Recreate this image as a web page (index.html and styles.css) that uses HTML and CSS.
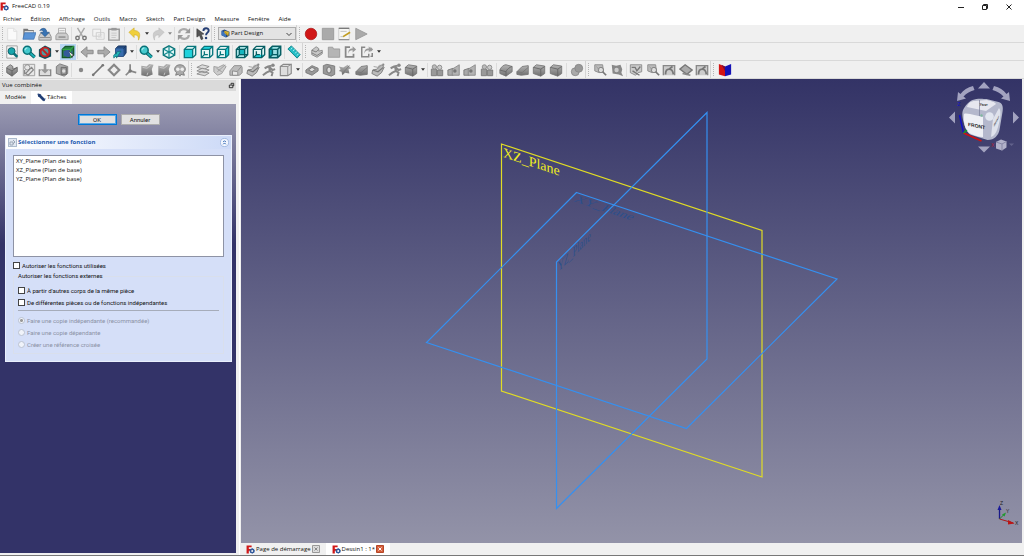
FILE: index.html
```html
<!DOCTYPE html>
<html lang="fr">
<head>
<meta charset="utf-8">
<title>FreeCAD 0.19</title>
<link rel="stylesheet" href="styles.css">
</head>
<body>
<svg class="sprite" aria-hidden="true">
  <defs>
    <linearGradient id="steel" x1="0" y1="0" x2="0" y2="1"><stop offset="0" stop-color="#b4b4b4"/><stop offset="1" stop-color="#707070"/></linearGradient>
    <symbol id="logo" viewBox="0 0 16 16"><path d="M1 1h9v3H5v3h4v3H5v5H1z" fill="#d01818"/><circle cx="11" cy="10.500" r="3" fill="none" stroke="#31599c" stroke-width="2.500"/><path d="M11 5.500v2M11 13.500v2M6 10.500h2M14 10.500h2M7.500 7l1.500 1.500M13 12.500l1.500 1.500M14.500 7L13 8.500M7.500 14L9 12.500" stroke="#31599c" stroke-width="1.500"/></symbol>
    <symbol id="new" viewBox="0 0 16 16"><path d="M3 1.500h7l3.500 3.500v10H3z" fill="#fafafa" stroke="#ddd"/><path d="M10 1.500V5h3.500" fill="none" stroke="#ddd"/></symbol>
    <symbol id="open" viewBox="0 0 16 16"><path d="M1.500 2h5l1 1.500h6V13h-12z" fill="#777"/><path d="M3 4.500h10V8H3z" fill="#ddd"/><path d="M3 6.500h13L13.500 14H1z" fill="#5b94d6" stroke="#3d70ac" stroke-width=".8"/></symbol>
    <symbol id="save" viewBox="0 0 16 16"><path d="M3 7h10l2 4v4H1v-4z" fill="#ccc" stroke="#888"/><path d="M2 12h12" stroke="#888"/><path d="M2 4c3-4 8-3 8 2h3l-5 5-5-5h3c0-2-1-3-4-2z" fill="#3873b4" stroke="#285486" stroke-width=".7"/></symbol>
    <symbol id="print" viewBox="0 0 16 16"><path d="M4 1.500h8V8H4z" fill="#f4f4f4" stroke="#aaa"/><path d="M3 7h10l2 3v4.500H1V10z" fill="#ccc" stroke="#999"/><path d="M4 11.500h8" stroke="#888" stroke-width="1.500"/><path d="M5 4h6M5 6h6" stroke="#bbb"/></symbol>
    <symbol id="cut" viewBox="0 0 16 16"><path d="M4 1l6 10M12 1L6 11" stroke="#aaa" stroke-width="1.600"/><circle cx="4" cy="12.500" r="2" fill="none" stroke="#777" stroke-width="1.600"/><circle cx="12" cy="12.500" r="2" fill="none" stroke="#777" stroke-width="1.600"/></symbol>
    <symbol id="copy" viewBox="0 0 16 16"><path d="M2 2.500h9v8H2zM6 6.500h9v7.500H6z" fill="#f3f3f3" stroke="#ccc"/><path d="M8 9h5M8 11.500h5" stroke="#d4d4d4"/></symbol>
    <symbol id="paste" viewBox="0 0 16 16"><path d="M2 2.500h12v12.500H2z" fill="#e8e8e8" stroke="#999" stroke-width="1.600"/><path d="M5 1h6v3H5z" fill="#999"/><path d="M5 7h6M5 9.500h6M5 12h5" stroke="#c5c5c5"/></symbol>
    <symbol id="undo" viewBox="0 0 16 16"><path d="M1 6l6-5v3c6 0 8 4 5 11 0-5-1-6-5-6v3z" fill="#f0cf3a" stroke="#cfae2a" stroke-width=".7"/></symbol>
    <symbol id="redo" viewBox="0 0 16 16"><path d="M15 6L9 1v3C3 4 1 8 4 15c0-5 1-6 5-6v3z" fill="#ccc" stroke="#bbb" stroke-width=".7"/></symbol>
    <symbol id="refresh" viewBox="0 0 16 16"><path d="M2.500 7c0-5 7-6 10-2.500M13.500 9c0 5-7 6-10 2.500" fill="none" stroke="#aaa" stroke-width="2.500"/><path d="M15 1v6H9zM1 15V9h6z" fill="#999"/></symbol>
    <symbol id="whats" viewBox="0 0 16 16"><path d="M1 2l8 6-3 .5 2 5-2 1-2-5-3 2z" fill="#555" stroke="#333" stroke-width=".7"/><path d="M8.500 4.500c0-4 6-4 6-.5 0 2.500-3 2.500-3 5.500" fill="none" stroke="#263f74" stroke-width="2.200"/><circle cx="11.500" cy="12.500" r="1.400" fill="#263f74"/></symbol>
    <symbol id="pd" viewBox="0 0 16 16"><path d="M1 3l5-2 9 4v7l-6 3-8-4z" fill="#24477e"/><path d="M1 3l8 4v8l-8-4z" fill="#3d74bd"/><path d="M6 3l8 2-1 8-7-6z" fill="#d9b32b"/><path d="M8 6l4 6" stroke="#7a5c10"/></symbol>
    <symbol id="rec" viewBox="0 0 16 16"><circle cx="8" cy="8" r="6.600" fill="#d01616" stroke="#a61111" stroke-width=".8"/></symbol>
    <symbol id="stop" viewBox="0 0 16 16"><path d="M1.500 1.500h13v13h-13z" fill="#aaa" stroke="#999"/></symbol>
    <symbol id="edit" viewBox="0 0 16 16"><path d="M2 1.500h12v13H2z" fill="#f7f7f4" stroke="#ccc"/><path d="M2 1.500h12" stroke="#777" stroke-width="1.500"/><path d="M2 14.500h12" stroke="#777"/><path d="M4 5h7M4 11h4" stroke="#bbb"/><path d="M7 11l8-5" stroke="#c29e22" stroke-width="2"/></symbol>
    <symbol id="play" viewBox="0 0 16 16"><path d="M2 1.500L15 8 2 14.500z" fill="#aaa" stroke="#999"/></symbol>
    <symbol id="fit" viewBox="0 0 16 16"><path d="M2 1h12v14H2z" fill="#f6f6f6" stroke="#999"/><circle cx="7.500" cy="7" r="4" fill="#19a6ac" stroke="#09575f"/><path d="M10 9.500l4 4" stroke="#087179" stroke-width="3"/></symbol>
    <symbol id="zoom" viewBox="0 0 16 16"><path d="M9 9l5.500 5" stroke="#075d62" stroke-width="4"/><path d="M9 9l5.500 5" stroke="#1fb2b8" stroke-width="2"/><circle cx="6" cy="6" r="4.500" fill="#45c9cd" stroke="#087177" stroke-width="1.800"/><path d="M3.500 6c0-2 1-2.500 2.500-2.500" stroke="#d8ffff" fill="none"/></symbol>
    <symbol id="noentry" viewBox="0 0 16 16"><path d="M1 5l7-4.500L15 4v9l-7 3-7-3z" fill="#124e5b"/><circle cx="8" cy="8" r="5" fill="#4d9da1" stroke="#c52020" stroke-width="2.200"/><path d="M4.500 4.500l7 7" stroke="#c52020" stroke-width="2.200"/></symbol>
    <symbol id="bbox" viewBox="0 0 16 16"><path d="M1.500 5L5 1.500h9.500V11L11 14.500H1.500z" fill="#267c46" stroke="#15562b" stroke-width="1.500"/><path d="M3 7l5-2 5 2v5l-5 2-5-2z" fill="#345a9b"/><path d="M1.500 5H11v9.500M11 5l3.500-3.500" fill="none" stroke="#31a647" stroke-width="1.500"/><path d="M9 7l6 5-3 .5 1 2.500" fill="#eee" stroke="#222" stroke-width=".7"/></symbol>
    <symbol id="left" viewBox="0 0 16 16"><path d="M1 8l7-6v4h7v4H8v4z" fill="#aaa" stroke="#888"/></symbol>
    <symbol id="right" viewBox="0 0 16 16"><path d="M15 8L8 2v4H1v4h7v4z" fill="#aaa" stroke="#888"/></symbol>
    <symbol id="linkbox" viewBox="0 0 16 16"><path d="M3 4l3-3h9v8l-3 4H3z" fill="#244b82" stroke="#17345f"/><path d="M3 4h9v9H3z" fill="#376cad"/><path d="M12 4l3-3" stroke="#17345f"/><path d="M9 7l-5 1v2c-3 0-4 2-3 5 1-2 2-2 3-2v2z" fill="#25b3b8" stroke="#08686c" stroke-width=".7"/></symbol>
    <symbol id="iso" viewBox="0 0 16 16"><path d="M8 1l6.500 3.500v7L8 15l-6.500-3.500v-7z" fill="#e5f7f7" stroke="#0c7377" stroke-width="1.600"/><path d="M1.500 4.500L8 8l6.500-3.500M8 1v14M1.500 11.500L8 8l6.500 3.500" fill="none" stroke="#148b90" stroke-width="1.400"/></symbol>
    <symbol id="vfront" viewBox="0 0 16 16"><path d="M1.500 5L5 1.500h9.500V11L11 14.500H1.500z" fill="#d6f4f4"/><path d="M1.500 5H11v9.500H1.500z" fill="#20d2dc"/><path d="M1.500 5L5 1.500h9.500V11L11 14.500H1.500zM1.500 5H11v9.500M11 5l3.500-3.500" fill="none" stroke="#08767c" stroke-width="1.500"/></symbol>
    <symbol id="vtop" viewBox="0 0 16 16"><path d="M1.500 5L5 1.500h9.500V11L11 14.500H1.500z" fill="#e7f5f5"/><path d="M1.500 5L5 1.500h9.500L11 5z" fill="#20d2dc"/><path d="M1.500 5L5 1.500h9.500V11L11 14.500H1.500zM1.500 5H11v9.500M11 5l3.500-3.500M5 7v4h4M5 11l-3.500 3.500" fill="none" stroke="#08767c" stroke-width="1.500"/></symbol>
    <symbol id="vright" viewBox="0 0 16 16"><path d="M1.500 5L5 1.500h9.500V11L11 14.500H1.500z" fill="#e7f5f5"/><path d="M11 5l3.500-3.500V11L11 14.500z" fill="#20d2dc"/><path d="M1.500 5L5 1.500h9.500V11L11 14.500H1.500zM1.500 5H11v9.500M11 5l3.500-3.500M5 7v4h4M5 11l-3.500 3.500" fill="none" stroke="#08767c" stroke-width="1.500"/></symbol>
    <symbol id="vrear" viewBox="0 0 16 16"><path d="M1.500 5L5 1.500h9.500V11L11 14.500H1.500z" fill="#a9e4e6"/><path d="M5 5h6v6H5z" fill="#16b8c1"/><path d="M1.500 5L5 1.500h9.500V11L11 14.500H1.500zM1.500 5H11v9.500M11 5l3.500-3.500M5 2v9h9M5 11l-3.500 3.500" fill="none" stroke="#075f64" stroke-width="1.500"/></symbol>
    <symbol id="vbottom" viewBox="0 0 16 16"><path d="M1.500 5L5 1.500h9.500V11L11 14.500H1.500z" fill="#e2f4f4"/><path d="M1.500 14.500L5 11h9.500L11 14.500z" fill="#20d2dc"/><path d="M1.500 5L5 1.500h9.500V11L11 14.500H1.500zM1.500 5H11v9.500M11 5l3.500-3.500M5 7v4h4M5 11l-3.500 3.500" fill="none" stroke="#075f64" stroke-width="1.500"/></symbol>
    <symbol id="vleft" viewBox="0 0 16 16"><path d="M1.500 5L5 1.500h9.500V11L11 14.500H1.500z" fill="#9bdfe2"/><path d="M1.500 5L5 2v9l-3.500 3.500z" fill="#0eaab5"/><path d="M1.500 5L5 1.500h9.500V11L11 14.500H1.500zM1.500 5H11v9.500M11 5l3.500-3.500M5 5v6h6M5 11l-3.500 3.500" fill="none" stroke="#075f64" stroke-width="1.700"/></symbol>
    <symbol id="ruler" viewBox="0 0 16 16"><path d="M5 1l10 10-3.500 4L1 4.500z" fill="#22bcc4" stroke="#0b7f86"/><path d="M6 3L4.500 5M8.500 5L7 7M11 7.500L9.500 9.500M13 10l-1.500 2" stroke="#c3f4f4"/></symbol>
    <symbol id="gpart" viewBox="0 0 16 16"><path d="M2 6l5-4 3 2v3l4-1v4l-6 4-6-3z" fill="#c7c7c7" stroke="#888"/><path d="M2 6l5 2 3-3M2 9l6 3 6-4" fill="none" stroke="#777"/></symbol>
    <symbol id="folder" viewBox="0 0 16 16"><path d="M1.500 2.500h5l1 2h7v9.500h-13z" fill="#b5b5b5" stroke="#999"/></symbol>
    <symbol id="link" viewBox="0 0 16 16"><path d="M8 2.500H3v11h9V10" fill="none" stroke="#888" stroke-width="2"/><path d="M6 10c0-5 2-6 5-6V1.500L15 5l-4 3.500V6C8 6 7 7 6 10z" fill="#999"/></symbol>
    <symbol id="links" viewBox="0 0 16 16"><path d="M6 2.500H2v11h8V10M12 13h2v-4" fill="none" stroke="#888" stroke-width="1.700"/><path d="M5 10c0-5 2-6 5-6V1.500L13 5l-3 3.500V6C7 6 6 7 5 10zM12 2l3 3-3 3" fill="#999"/></symbol>
    <symbol id="solid" viewBox="0 0 16 16"><path d="M1.500 5L5 2l9.500 1.500v8.500L10 15l-8.500-3z" fill="url(#steel)" stroke="#777"/><path d="M1.500 5l8.500 2 4.500-3M10 7v8" stroke="#666" fill="none"/></symbol>
    <symbol id="fillet" viewBox="0 0 16 16"><path d="M1 8c1-3 4-6 7-6l7 2v6l-7 5-7-3z" fill="url(#steel)" stroke="#777"/><path d="M1 8l7 2c1-3 4-5 7-6M8 10v5" stroke="#666" fill="none"/></symbol>
    <symbol id="body" viewBox="0 0 16 16"><path d="M2 5l4-3 3 2v3l5-2v5l-6 5-6-4z" fill="url(#steel)" stroke="#666"/><path d="M2 6l6 3 6-4M8 9v6" fill="none" stroke="#666"/></symbol>
    <symbol id="sketch" viewBox="0 0 16 16"><path d="M1.500 1.500h13v13h-13z" fill="#e7e7e7" stroke="#999"/><circle cx="6" cy="5" r="3" fill="none" stroke="#888"/><path d="M4 12l7-7 2 3-6 6zM3 8v5" fill="none" stroke="#888" stroke-width="1.400"/></symbol>
    <symbol id="import" viewBox="0 0 16 16"><path d="M3 8H1.500v6.500h13V8H13" fill="#ddd" stroke="#888" stroke-width="1.500"/><path d="M6.500 1h3v6H13l-5 5-5-5h3.500z" fill="#999"/></symbol>
    <symbol id="clip" viewBox="0 0 16 16"><path d="M1.500 4l4-3 9 3v8l-4 3-9-3z" fill="#aaa" stroke="#777"/><path d="M7 5h6v8H7z" fill="#999" stroke="#666"/><circle cx="10" cy="9" r="2" fill="#ddd"/></symbol>
    <symbol id="point" viewBox="0 0 16 16"><circle cx="8" cy="8" r="2.500" fill="#888"/></symbol>
    <symbol id="line" viewBox="0 0 16 16"><path d="M2 14L14 2" stroke="#777" stroke-width="2"/><circle cx="2.500" cy="13.500" r="1.500" fill="#777"/><circle cx="13.500" cy="2.500" r="1.500" fill="#777"/></symbol>
    <symbol id="diamond" viewBox="0 0 16 16"><path d="M8 2l6 6-6 6-6-6z" fill="#eee" stroke="#888" stroke-width="2.500"/></symbol>
    <symbol id="axes" viewBox="0 0 16 16"><path d="M7 1.500V9l7 2M7 9l-5 5" fill="none" stroke="#888" stroke-width="2"/><circle cx="7" cy="9" r="2" fill="#777"/></symbol>
    <symbol id="bind" viewBox="0 0 16 16"><path d="M1.500 3l6 1 3-3 5 1-2 5 1 6-6 2.500-7-1.500z" fill="url(#steel)"/><path d="M3 5l5 1 4-3M8 14l1-3" stroke="#ccc" fill="none"/></symbol>
    <symbol id="dd" viewBox="0 0 16 16"><path d="M3 14l1-3C0 8 2 2 8 2s8 6 4 9l1 3-4-1-1 2-2-2z" fill="#aaa" stroke="#777"/><circle cx="5.500" cy="7" r="2" fill="#eee"/><circle cx="10.500" cy="7" r="2" fill="#eee"/></symbol>
    <symbol id="sheets" viewBox="0 0 16 16"><path d="M1 5l6-3 8 2-5 3z" fill="#ddd" stroke="#888"/><path d="M1 9l6-3 8 2-5 3zM1 12.500l6-3 8 2-5 3z" fill="#d8d8d8" stroke="#888"/></symbol>
    <symbol id="revolve" viewBox="0 0 16 16"><path d="M1 4l5 1 6-3 3 2-5 8-5 2-4-4z" fill="#ccc" stroke="#999"/><path d="M5 10l9-8M4 6l6 4" stroke="#999"/></symbol>
    <symbol id="loft" viewBox="0 0 16 16"><path d="M1 14V9l5-6h8l1 2v6l-3 3z" fill="#bbb" stroke="#888"/><path d="M4 14V9l6 1v4z" fill="#e8e8e8" stroke="#888"/><path d="M10 9l4-5" stroke="#888"/></symbol>
    <symbol id="sweep" viewBox="0 0 16 16"><path d="M2 8l5-1 5-5 3 3-3 6-5 4-6-3z" fill="#bbb" stroke="#777"/><path d="M2 8l6 2 6-5" stroke="#777" fill="none" stroke-width="1.300"/><path d="M3 4l5 1 2-3" fill="none" stroke="#999"/><circle cx="14" cy="2" r="1.300" fill="#888"/></symbol>
    <symbol id="helix" viewBox="0 0 16 16"><path d="M11 3L7 4 3 6M8 4l1 5-4 2-4 3M9 9l3 2-1 4M9 5l3 3 3-1" fill="none" stroke="#888" stroke-width="2.300"/><circle cx="12.500" cy="2.500" r="2" fill="#888"/></symbol>
    <symbol id="prim" viewBox="0 0 16 16"><path d="M1.500 4L5 1.500h9V12l-4 2.500H1.500z" fill="#ddd" stroke="#888" stroke-width="1.300"/><path d="M1.500 4H10v10.500M10 4l4-2.500" fill="none" stroke="#888"/></symbol>
    <symbol id="pocket" viewBox="0 0 16 16"><path d="M1 8l7-5 7 3v3l-7 5-7-3z" fill="#999" stroke="#777"/><path d="M4 8l4-3 4 2-4 3z" fill="#e0e0e0" stroke="#777"/></symbol>
    <symbol id="hole" viewBox="0 0 16 16"><path d="M1.500 3l4-1.500 9 2V13l-4 2-9-3z" fill="#999" stroke="#777"/><ellipse cx="8" cy="8" rx="2.500" ry="3.500" fill="#ddd" stroke="#666"/></symbol>
    <symbol id="groove" viewBox="0 0 16 16"><path d="M1 4l5 1 5-3 4 4-3 1 1 5-5-1-3 3-1-4-3-1 2-2z" fill="url(#steel)"/><path d="M5 12l8-9" stroke="#777"/></symbol>
    <symbol id="wedge" viewBox="0 0 16 16"><path d="M1 10l6-6 7-1v10l-8 1-5-1z" fill="url(#steel)" stroke="#777"/><path d="M1 10l6 1 7-6" stroke="#777" fill="none"/></symbol>
    <symbol id="bool" viewBox="0 0 16 16"><circle cx="6" cy="10" r="4.500" fill="#aaa" stroke="#888"/><circle cx="10" cy="6" r="4.500" fill="#999" stroke="#888"/></symbol>
    <symbol id="mirror" viewBox="0 0 16 16"><path d="M1.500 7h6v7.500h-6zM8.500 8h6v6.500h-6z" fill="#999" stroke="#777"/><circle cx="5" cy="4.500" r="2.500" fill="#bbb" stroke="#888"/><circle cx="11" cy="5" r="2.500" fill="#ccc" stroke="#888"/></symbol>
    <symbol id="linear" viewBox="0 0 16 16"><path d="M1 8l6-2v8H1z" fill="#aaa" stroke="#777"/><path d="M6 7l8-5v12H6z" fill="#b3b3b3" stroke="#888"/><circle cx="9" cy="9" r="2" fill="#777"/></symbol>
    <symbol id="zoomcheck" viewBox="0 0 16 16"><path d="M2 2h9l1 8-5 1-5-2z" fill="#bbb" stroke="#888"/><circle cx="9" cy="8" r="3" fill="#ddd" stroke="#777"/><path d="M11 10l4 4" stroke="#777" stroke-width="2"/><path d="M4 4l3 4" stroke="#999"/></symbol>
    <symbol id="mgear" viewBox="0 0 16 16"><path d="M2 2l5 1 5-1 2 5-1 4 2 4-5-2-7-1z" fill="#888"/><circle cx="7.500" cy="8" r="2.500" fill="#ccc"/></symbol>
    <symbol id="mcheck" viewBox="0 0 16 16"><path d="M1.500 2h13v8l-4 1-3 3-6-3z" fill="#ccc" stroke="#888"/><path d="M3 5h4l2 4 4-5M4 9l8 5" fill="none" stroke="#777" stroke-width="1.500"/></symbol>
    <symbol id="marc" viewBox="0 0 16 16"><path d="M1.500 14V3h13v11" fill="#ccc" stroke="#888" stroke-width="1.500"/><path d="M4 13c0-8 8-8 9 0M8 7l4-3" fill="none" stroke="#777" stroke-width="2"/></symbol>
    <symbol id="mdia" viewBox="0 0 16 16"><path d="M1 7l6-5 8 6-6 5z" fill="#aaa" stroke="#777" stroke-width="1.500"/><path d="M4 12l9 2" stroke="#888" stroke-width="2"/></symbol>
    <symbol id="book" viewBox="0 0 16 16"><path d="M1 1l7 3v11l-7-2z" fill="#d31212"/><path d="M15 1L8 4v11l7-2z" fill="#1512b6"/><path d="M4 2l4 2v5z" fill="#780d38"/></symbol>
    <symbol id="caret" viewBox="0 0 6 4"><path d="M0 0h6L3 4z" fill="currentColor"/></symbol>
  </defs>
</svg>

<header class="titlebar">
  <svg class="logo"><use href="#logo"/></svg>
  <h1 class="app-title">FreeCAD 0.19</h1>
  <div class="window-buttons">
    <button aria-label="Réduire"><svg viewBox="0 0 8 8"><path d="M1 4.500h6" stroke="#222" fill="none"/></svg></button>
    <button aria-label="Restaurer"><svg viewBox="0 0 8 8"><path d="M1.500 2.500h4v4h-4zM2.500 2.500v-1h4v4h-1" stroke="#222" fill="none"/></svg></button>
    <button aria-label="Fermer"><svg viewBox="0 0 8 8"><path d="M1.500 1.500l5 5M6.500 1.500l-5 5" stroke="#222" fill="none"/></svg></button>
  </div>
</header>
<nav class="menubar">
  <button>Fichier</button><button>Édition</button><button>Affichage</button><button>Outils</button><button>Macro</button><button>Sketch</button><button>Part Design</button><button>Measure</button><button>Fenêtre</button><button>Aide</button>
</nav>

<div class="toolbar">
  <i class="grip first"></i>
  <div class="group"><button aria-label="Nouveau"><svg><use href="#new"/></svg></button><button aria-label="Ouvrir"><svg><use href="#open"/></svg></button><button aria-label="Enregistrer"><svg><use href="#save"/></svg></button><button aria-label="Imprimer"><svg><use href="#print"/></svg></button></div>
  <i class="sep"></i>
  <div class="group"><button aria-label="Couper"><svg><use href="#cut"/></svg></button><button aria-label="Copier"><svg><use href="#copy"/></svg></button><button aria-label="Coller"><svg><use href="#paste"/></svg></button></div>
  <i class="sep wide"></i>
  <div class="group"><button aria-label="Annuler l'action"><svg><use href="#undo"/></svg></button></div>
  <button class="drop" aria-label="Historique d'annulation"><svg><use href="#caret"/></svg></button>
  <div class="group"><button aria-label="Rétablir"><svg><use href="#redo"/></svg></button></div>
  <button class="drop dim" aria-label="Historique de rétablissement"><svg><use href="#caret"/></svg></button>
  <i class="sep"></i>
  <div class="group"><button aria-label="Rafraîchir"><svg><use href="#refresh"/></svg></button></div>
  <i class="sep"></i>
  <div class="group"><button aria-label="Qu'est-ce que c'est ?"><svg><use href="#whats"/></svg></button></div>
  <i class="grip"></i>
  <div class="workbench">
    <svg class="wb-icon"><use href="#pd"/></svg>
    <select aria-label="Atelier"><option>Part Design</option></select>
    <svg class="chevron" viewBox="0 0 8 8"><path d="M1.500 3L4 5.500 6.500 3" fill="none" stroke="#444"/></svg>
  </div>
  <i class="grip"></i>
  <div class="group"><button aria-label="Enregistrer une macro"><svg><use href="#rec"/></svg></button><button aria-label="Arrêter"><svg><use href="#stop"/></svg></button><button aria-label="Macros"><svg><use href="#edit"/></svg></button><button aria-label="Exécuter"><svg><use href="#play"/></svg></button></div>
</div>

<div class="toolbar">
  <i class="grip first"></i>
  <div class="group"><button aria-label="Tout afficher"><svg><use href="#fit"/></svg></button><button aria-label="Zoom sélection"><svg><use href="#zoom"/></svg></button><button aria-label="Style de rendu"><svg><use href="#noentry"/></svg></button></div>
  <button class="drop" aria-label="Styles de rendu"><svg><use href="#caret"/></svg></button>
  <div class="group"><button class="active" aria-label="Boîte englobante"><svg><use href="#bbox"/></svg></button></div>
  <i class="sep"></i>
  <div class="group"><button aria-label="Précédent"><svg><use href="#left"/></svg></button><button aria-label="Suivant"><svg><use href="#right"/></svg></button><button aria-label="Aller à l'objet lié"><svg><use href="#linkbox"/></svg></button></div>
  <button class="drop" aria-label="Navigation des liens"><svg><use href="#caret"/></svg></button>
  <i class="sep"></i>
  <div class="group"><button aria-label="Zoom"><svg><use href="#zoom"/></svg></button></div>
  <button class="drop" aria-label="Options de zoom"><svg><use href="#caret"/></svg></button>
  <div class="group"><button aria-label="Isométrique"><svg><use href="#iso"/></svg></button></div>
  <i class="sep wide"></i>
  <div class="group"><button aria-label="Face"><svg><use href="#vfront"/></svg></button><button aria-label="Dessus"><svg><use href="#vtop"/></svg></button><button aria-label="Droite"><svg><use href="#vright"/></svg></button></div>
  <i class="sep"></i>
  <div class="group"><button aria-label="Arrière"><svg><use href="#vrear"/></svg></button><button aria-label="Dessous"><svg><use href="#vbottom"/></svg></button><button aria-label="Gauche"><svg><use href="#vleft"/></svg></button></div>
  <i class="sep"></i>
  <div class="group"><button aria-label="Mesurer"><svg><use href="#ruler"/></svg></button></div>
  <i class="grip"></i>
  <div class="group"><button aria-label="Créer une pièce"><svg><use href="#gpart"/></svg></button><button aria-label="Créer un groupe"><svg><use href="#folder"/></svg></button><button aria-label="Créer un lien"><svg><use href="#link"/></svg></button><button aria-label="Créer un sous-lien"><svg><use href="#links"/></svg></button></div>
  <button class="drop" aria-label="Options de lien"><svg><use href="#caret"/></svg></button>
</div>

<div class="toolbar">
  <i class="grip first"></i>
  <div class="group"><button aria-label="Corps"><svg><use href="#body"/></svg></button><button aria-label="Esquisse"><svg><use href="#sketch"/></svg></button><button aria-label="Importer"><svg><use href="#import"/></svg></button><button aria-label="Plaquer"><svg><use href="#clip"/></svg></button></div>
  <i class="sep"></i>
  <div class="group"><button aria-label="Point"><svg><use href="#point"/></svg></button><button aria-label="Ligne"><svg><use href="#line"/></svg></button><button aria-label="Plan"><svg><use href="#diamond"/></svg></button><button aria-label="Repère"><svg><use href="#axes"/></svg></button><button aria-label="Forme liée"><svg><use href="#bind"/></svg></button><button aria-label="Sous-forme liée"><svg><use href="#bind"/></svg></button><button aria-label="Clone"><svg><use href="#dd"/></svg></button></div>
  <i class="grip"></i>
  <div class="group"><button aria-label="Protrusion"><svg><use href="#sheets"/></svg></button><button aria-label="Révolution"><svg><use href="#revolve"/></svg></button><button aria-label="Lissage"><svg><use href="#loft"/></svg></button><button aria-label="Balayage"><svg><use href="#sweep"/></svg></button><button aria-label="Hélice"><svg><use href="#helix"/></svg></button><button aria-label="Primitive additive"><svg><use href="#prim"/></svg></button></div>
  <button class="drop" aria-label="Primitives additives"><svg><use href="#caret"/></svg></button>
  <i class="sep"></i>
  <div class="group"><button aria-label="Cavité"><svg><use href="#pocket"/></svg></button><button aria-label="Perçage"><svg><use href="#hole"/></svg></button><button aria-label="Rainure"><svg><use href="#groove"/></svg></button><button aria-label="Enlèvement lissé"><svg><use href="#wedge"/></svg></button><button aria-label="Enlèvement balayé"><svg><use href="#sweep"/></svg></button><button aria-label="Hélice soustractive"><svg><use href="#helix"/></svg></button><button aria-label="Primitive soustractive"><svg><use href="#solid"/></svg></button></div>
  <button class="drop" aria-label="Primitives soustractives"><svg><use href="#caret"/></svg></button>
  <i class="sep"></i>
  <div class="group"><button aria-label="Symétrie"><svg><use href="#mirror"/></svg></button><button aria-label="Répétition linéaire"><svg><use href="#linear"/></svg></button><button aria-label="Répétition circulaire"><svg><use href="#linear"/></svg></button><button aria-label="Transformation multiple"><svg><use href="#mirror"/></svg></button></div>
  <i class="sep"></i>
  <div class="group"><button aria-label="Congé"><svg><use href="#fillet"/></svg></button><button aria-label="Chanfrein"><svg><use href="#wedge"/></svg></button><button aria-label="Dépouille"><svg><use href="#solid"/></svg></button><button aria-label="Évidement"><svg><use href="#solid"/></svg></button></div>
  <i class="sep wide"></i>
  <div class="group"><button aria-label="Opération booléenne"><svg><use href="#bool"/></svg></button></div>
  <i class="grip"></i>
  <div class="group"><button aria-label="Mesure linéaire"><svg><use href="#zoomcheck"/></svg></button><button aria-label="Mesure angulaire"><svg><use href="#mgear"/></svg></button></div>
  <i class="sep"></i>
  <div class="group"><button aria-label="Actualiser les mesures"><svg><use href="#mcheck"/></svg></button><button aria-label="Effacer les mesures"><svg><use href="#zoomcheck"/></svg></button><button aria-label="Afficher les mesures"><svg><use href="#marc"/></svg></button><button aria-label="Mesures 3D"><svg><use href="#mdia"/></svg></button><button aria-label="Mesures delta"><svg><use href="#marc"/></svg></button></div>
  <i class="grip"></i>
  <div class="group"><button aria-label="Vue en coupe"><svg><use href="#book"/></svg></button></div>
</div>

<main class="workspace">
  <aside class="dock">
    <header class="dock-title">Vue combinée
      <button aria-label="Détacher"><svg viewBox="0 0 8 8"><path d="M1.500 3.500h4v3h-4zM3.500 3V1.500h3v3H6" stroke="#222" fill="none"/></svg></button>
    </header>
    <div class="dock-tabs">
      <button>Modèle</button>
      <button class="selected"><svg viewBox="0 0 10 10"><path d="M2 2l6 6" stroke="#203e75" stroke-width="3"/><path d="M1 1l3 1-2 2zM8 9l1-3" fill="#203e75" stroke="#203e75"/></svg>Tâches</button>
    </div>
    <div class="tasks">
      <div class="actions"><button class="primary">OK</button><button>Annuler</button></div>
      <section class="card">
        <header class="card-head">
          <svg class="card-icon" viewBox="0 0 9 9"><path d="M.5.500h8v8h-8z" fill="#e2e8f2" stroke="#6882a3" stroke-dasharray="1 1"/><path d="M2 4h3v3H2zM5 2l2 2-2 2" fill="none" stroke="#9aa5b5"/></svg>
          <h2>Sélectionner une fonction</h2>
          <button aria-label="Replier"><svg viewBox="0 0 10 10"><circle cx="5" cy="5" r="4.500" fill="#f5f8ff" stroke="#9cb6df"/><path d="M3.500 4.500L5 3l1.500 1.500M3.500 7L5 5.500 6.500 7" fill="none" stroke="#1d5aab"/></svg></button>
        </header>
        <div class="card-body">
          <select class="features" size="4" aria-label="Plans de base">
            <option>XY_Plane (Plan de base)</option>
            <option>XZ_Plane (Plan de base)</option>
            <option>YZ_Plane (Plan de base)</option>
          </select>
          <label class="row"><input type="checkbox">Autoriser les fonctions utilisées</label>
          <fieldset class="external">
            <legend>Autoriser les fonctions externes</legend>
            <label class="row"><input type="checkbox">À partir d'autres corps de la même pièce</label>
            <label class="row"><input type="checkbox">De différentes pièces ou de fonctions indépendantes</label>
            <hr>
            <label class="row off"><input type="radio" name="mode" checked disabled>Faire une copie indépendante (recommandée)</label>
            <label class="row off"><input type="radio" name="mode" disabled>Faire une copie dépendante</label>
            <label class="row off"><input type="radio" name="mode" disabled>Créer une référence croisée</label>
          </fieldset>
        </div>
      </section>
    </div>
  </aside>

  <div class="mdi">
    <div class="view">
      <svg class="scene" viewBox="241 79 781 464" role="img" aria-label="Vue 3D">
        <g class="label">
          <text class="ghost" transform="matrix(1 .331 -.575 .575 573 201)">XY_Plane</text>
          <text class="ghost" transform="matrix(.577 -.573 0 1 558 272)">YZ_Plane</text>
          <text class="bright" transform="matrix(1 .331 0 1 503 157)">XZ_Plane</text>
        </g>
        <path class="plane yellow" d="M501.500 144L762 230.500V477L501.500 391z"/>
        <path class="plane blue" d="M576.500 192.500L837 279 686.500 428.500 426.500 342.500z"/>
        <path class="plane blue" d="M707 112.500V359L556.500 508.500V262z"/>

        <g fill="#a3a3c0">
          <path d="M984 82l6 6.500h-12zM984 152.500l6-6h-12zM949 117.500l6-6v12zM1019 117.500l-6-6v12z"/>
          <path d="M957 101l1-9 2.500 2c3-4 7-6.500 12.500-8l1.500 4c-5 1.500-8.500 3.500-11 6.500l2.500 2zM1010 101l-1-9-2.500 2c-3-4-7-6.500-12.500-8l-1.500 4c5 1.500 8.500 3.500 11 6.500l-2.500 2z"/>
        </g>
        <path d="M962.500 112c0-3 6-11 10-12 5-2 11-1 14-1l12 3c4 1 5 5 4 10l-3 18c-1 5-5 10-12 10l-16-5c-6-2-10-18-9-23z" fill="#b4b8cc"/>
        <path d="M967 107c1-4 4-6 8-6l12-1c4 1 8 2 9 4l-10 7z" fill="#e6e7ef"/>
        <path d="M964 114c2-1 4 0 6 0l13 3v20c-5 0-10-2-14-4-4-3-6-12-5-19z" fill="#eef0f5"/>
        <path d="M993 119l6-11c3 3 1 14-2 22-1 3-3 6-6 7z" fill="#dfe2ec"/>
        <circle cx="989.500" cy="116.500" r="4.300" fill="#e2e6f0"/>
        <path d="M979.500 100v16" stroke="#777b96" stroke-width=".7"/><circle cx="981.500" cy="115.500" r="1.200" fill="#7fb8a0"/>
        <text class="face" transform="matrix(1 .2 0 1 968 126)">FRONT</text>
        <text class="face small" transform="matrix(1 .1 -.3 .7 979 105.500)">TOP</text>
        <text class="face small" transform="matrix(.4 -.7 0 1 994 127)">RIGHT</text>
        <path d="M959.500 115l4 18" stroke="#1111c5" stroke-width="1.500"/><path d="M963.500 133l18 8" stroke="#d01010" stroke-width="1.500"/><path d="M963.500 133l3.500-3" stroke="#11a321" stroke-width="1.500"/>
        <text class="axis" x="957.500" y="106" fill="#1111c5">Z</text><text class="axis" x="991" y="147" fill="#b52034">X</text>
        <path d="M996 142l5-2.500 5.500 2v6l-4.500 3-6-2z" fill="#b2b2ca"/><path d="M996 142l6 2 4.500-2.500M1002 144v6.500" fill="none" stroke="#8686a5"/><path d="M1009 143.500h5l-2.500 2.500z" fill="#62628c"/>

        <path d="M999.500 519v-10" stroke="#191989" stroke-width="1.300"/><path d="M997.500 510l2-5 2 5z" fill="#191999"/>
        <path d="M999.500 519l4-4" stroke="#208a2c"/><path d="M1002 514.500l4-2-1.500 4z" fill="#209a2c"/>
        <path d="M999.500 519l14 4" stroke="#ad1717"/><path d="M1008 520l6.500 3.500-6.500 1z" fill="#bb1515"/>
        <text class="axis dark" x="1000" y="505">Z</text><text class="axis dark" x="1006" y="513">Y</text><text class="axis dark" x="1015" y="525">X</text>
      </svg>
    </div>
    <div class="doc-tabs">
      <div class="doc-tab"><svg class="logo"><use href="#logo"/></svg><span>Page de démarrage</span><button aria-label="Fermer Page de démarrage"><svg viewBox="0 0 8 8"><path d="M.5.500h7v7h-7z" fill="#ddd" stroke="#999"/><path d="M2.500 2.500l3 3M5.500 2.500l-3 3" stroke="#888"/></svg></button></div>
      <div class="doc-tab current"><svg class="logo"><use href="#logo"/></svg><span>Dessin1 : 1*</span><button aria-label="Fermer Dessin1"><svg viewBox="0 0 8 8"><path d="M.5.500h7v7h-7z" fill="#d7603d" stroke="#b54727"/><path d="M2.500 2.500l3 3M5.500 2.500l-3 3" stroke="#fff"/></svg></button></div>
    </div>
  </div>
</main>
</body>
</html>
```
FILE: styles.css
```css
* { box-sizing: border-box; }
body {
  margin: 0;
  height: 100vh;
  display: flex;
  flex-direction: column;
  overflow: hidden;
  background: #f0f0f0;
  border-bottom: 1px solid #777;
  font: 6px/9px "Open Sans", "Noto Sans", sans-serif;
  color: #111;
}
button, select, input {
  font: inherit;
  color: inherit;
  margin: 0;
  padding: 0;
  border: 0;
  background: none;
}
svg { display: block; flex: none; }
.sprite { position: absolute; width: 0; height: 0; }
.logo { width: 9px; height: 9px; }

/* title bar and menus */
.titlebar {
  display: flex;
  align-items: center;
  gap: 3px;
  height: 13px;
  background: #fff;
}
.app-title { margin: 0; font-size: 6px; font-weight: 400; }
.window-buttons { display: flex; gap: 16px; margin-left: auto; padding-right: 11px; }
.window-buttons svg { width: 8px; height: 8px; }
.menubar {
  display: flex;
  gap: 9px;
  height: 12px;
  padding: 1px 3px 0;
  background: #fff;
}

/* toolbars */
.toolbar {
  display: flex;
  align-items: center;
  height: 18px;
  border-bottom: 1px solid #d9d9d9;
}
.group { display: flex; }
.group button {
  display: flex;
  align-items: center;
  justify-content: center;
  width: 16px;
  height: 16px;
}
.group button:nth-child(even) { width: 17px; }
.group svg { width: 14px; height: 14px; }
.group .active { background: #b9d7f5; }
.drop { width: 7px; height: 16px; color: #333; }
.drop svg { width: 4px; height: 3px; margin: auto; }
.drop.dim { color: #888; }
.sep {
  width: 3px;
  height: 14px;
  background: linear-gradient(#dcdcdc, #dcdcdc) center / 1px 100% no-repeat;
}
.sep.wide { width: 5px; }
.grip {
  width: 7px;
  height: 17px;
  border-left: 1px solid #d4d4d4;
  background: repeating-linear-gradient(#b5b5b5 0 1px, #f0f0f0 1px 2px) 2px 2px / 1px 13px no-repeat;
}
.grip.first { width: 4px; border-left: 0; }
.workbench {
  display: flex;
  align-items: center;
  width: 78px;
  height: 13px;
  padding: 0 2px;
  border: 1px solid #adadad;
  background: #e3e3e3;
}
.wb-icon { width: 9px; height: 9px; }
.workbench select { appearance: none; flex: 1; min-width: 0; padding-left: 1px; }
.chevron { width: 8px; height: 8px; }

/* main area */
.workspace { flex: 1; min-height: 0; display: flex; }
.dock {
  width: 240px;
  display: flex;
  flex-direction: column;
  padding: 1px 3px 2px 0;
  border-right: 1px solid #fff;
}
.dock-title {
  display: flex;
  justify-content: space-between;
  align-items: center;
  height: 11px;
  padding: 0 1px 0 2px;
  background: #dadada;
}
.dock-title svg { width: 7px; height: 7px; }
.dock-tabs { display: flex; height: 13px; align-items: stretch; }
.dock-tabs button { display: flex; align-items: center; gap: 1px; padding: 0 5px; }
.dock-tabs .selected { background: #fff; padding: 0 6px; }
.dock-tabs svg { width: 9px; height: 9px; }
.tasks {
  flex: 1;
  min-height: 0;
  padding: 10px 4px 0 5px;
  background: linear-gradient(#9a9ab2, #333368 140px);
  font-family: Roboto, "Liberation Sans", sans-serif;
}
.actions { display: flex; justify-content: center; gap: 4px; margin-bottom: 10px; }
.actions button {
  width: 39px;
  height: 11px;
  border: 1px solid #adadad;
  background: #e1e1e1;
}
.actions .primary { border-color: #0078d7; box-shadow: inset 0 0 0 1px #5aa9e6; }
.card { background: #d5dff8; border: 1px solid #e9effc; }
.card-head {
  display: flex;
  align-items: center;
  gap: 1px;
  height: 13px;
  padding: 0 2px;
  background: linear-gradient(90deg, #fff, #cddaf7);
}
.card-head h2 {
  flex: 1;
  margin: 0;
  font: 700 6px/9px "Open Sans", "Noto Sans", sans-serif;
  color: #1e5bb0;
}
.card-head button svg { width: 9px; height: 9px; }
.card-icon { width: 9px; height: 9px; }
.card-body { padding: 6px 7px 7px; }
.features {
  display: block;
  width: 100%;
  height: 102px;
  margin-bottom: 2px;
  padding-top: 1px;
  overflow: hidden;
  border: 1px solid #8e93a5;
  border-radius: 0;
  background: #fff;
  outline: 0;
  font-family: "Open Sans", "Noto Sans", sans-serif;
}
.features option { min-height: 9px; height: 9px; padding: 0 2px; line-height: 9px; }
.row { display: flex; align-items: center; gap: 2px; height: 12px; }
.row input {
  appearance: none;
  flex: none;
  width: 7px;
  height: 7px;
  border: 1px solid #444;
  background: #fff;
}
.row.off { color: #8b92a5; }
.row.off input { border: 1px solid #bcc3d2; border-radius: 50%; background: #f0f3fa; }
.row.off input:checked { background: radial-gradient(#999 1px, #f0f3fa 2px); }
.external {
  min-width: 0;
  margin: 0;
  padding: 3px 4px;
  border: 1px solid #d9dfec;
}
.external legend { padding: 0; height: 10px; line-height: 10px; }
.external hr { margin: 2px 0 3px; border: 0; border-top: 1px solid #a6acba; }

/* 3D view */
.mdi { flex: 1; min-width: 0; display: flex; flex-direction: column; padding: 0 2px 0 1px; }
.view { flex: 1; min-height: 0; background: linear-gradient(#333366, #9393a8); }
.scene { width: 100%; height: 100%; }
.label { font: 14px "Liberation Serif", serif; }
.ghost { fill: #2c4f8c; }
.bright { fill: #f1ec20; }
.plane { fill: none; stroke-width: 1.2; }
.yellow { stroke: #e0dc25; }
.blue { stroke: #3590f0; }
.face { font: 700 5px "Liberation Sans", sans-serif; fill: #222; }
.face.small { font-size: 4px; }
.axis { font: 5px "Liberation Sans", sans-serif; }
.axis.dark { fill: #222; }
.doc-tabs { display: flex; height: 12px; padding-left: 1px; }
.doc-tab { display: flex; align-items: center; gap: 1px; padding: 0 4px; }
.doc-tab.current { margin-left: 2px; padding: 0 6px; background: #fff; }
.doc-tab button svg { width: 8px; height: 8px; }
```
